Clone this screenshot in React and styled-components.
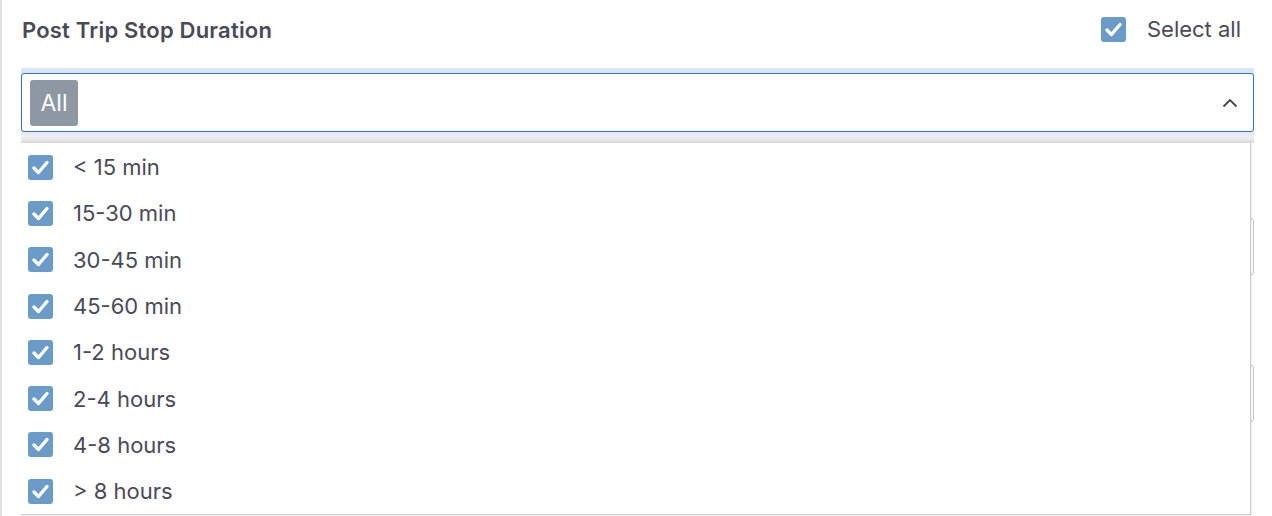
import React from "react";
import styled, { createGlobalStyle } from "styled-components";

const Global = createGlobalStyle`
  html, body { margin: 0; padding: 0; background: #fff; }
  body { font-family: Inter, "Noto Sans", sans-serif; }
`;

const Page = styled.div`
  position: relative;
  height: 516px;
  overflow: hidden;
  border-left: 2px solid #e2e2e2;
  padding: 0 18px 0 19px;
  color: #4a4a56;
`;

const Header = styled.div`
  display: flex;
  align-items: center;
  justify-content: space-between;
  height: 68px;
  padding: 0 13px 10px 1px;
  box-sizing: border-box;
`;

const Title = styled.h2`
  margin: 0;
  font-size: 22px;
  font-weight: 600;
  letter-spacing: 0.2px;
  color: #4a4a56;
  padding-top: 2px;
`;

const SelectAll = styled.label`
  display: flex;
  align-items: center;
  gap: 21px;
  font-size: 22px;
  color: #4a4a56;
`;

const Field = styled.div`
  position: relative;
  padding-top: 5px;
  background: #dbe5f4;
`;

const SelectBox = styled.div`
  display: flex;
  align-items: center;
  justify-content: space-between;
  height: 59px;
  box-sizing: border-box;
  border: 1px solid #2f6fd6;
  border-radius: 3px;
  background: #fff;
  padding: 0 15px 0 8px;
`;

const Chip = styled.span`
  display: inline-flex;
  align-items: center;
  justify-content: center;
  width: 48px;
  height: 46px;
  border-radius: 3px;
  background: #8d98a2;
  color: #fff;
  font-size: 23px;
`;

const Band = styled.div`
  height: 11px;
  background: linear-gradient(to bottom, #e4eaf3 0%, #eceef1 45%, #e6e6e6 75%, #d6d6d6 100%);
`;

const Behind = styled.div`
  display: flex;
  flex-direction: column;
`;

const GhostInput = styled.div`
  height: 55px;
  margin-top: ${(p) => p.$top}px;
  border: 1px solid #c8c8c8;
  border-radius: 3px;
`;

const Menu = styled.ul`
  position: absolute;
  left: 19px;
  right: 21px;
  top: 143px;
  margin: 0;
  padding: 1px 0 0;
  list-style: none;
  background: #fff;
  border-right: 1px solid #cfcfcf;
  border-bottom: 1px solid #cfcfcf;
  box-shadow: 1px 1px 1px rgba(0, 0, 0, 0.06);
  z-index: 2;
`;

const Option = styled.li`
  display: flex;
  align-items: center;
  gap: 20px;
  height: 46.3px;
  padding-left: 7px;
  font-size: 22px;
  color: #4a4a56;
`;

const Check = ({ size = 25 }) => (
  <svg width={size} height={size} viewBox="0 0 25 25" aria-hidden="true">
    <rect x="0" y="0" width="25" height="25" rx="3" fill="#6a9bc9" />
    <path
      d="M6 13 L10.5 17.5 L19 7.5"
      fill="none"
      stroke="#fff"
      strokeWidth="3.4"
      strokeLinecap="round"
      strokeLinejoin="round"
    />
  </svg>
);

const Chevron = () => (
  <svg width="16" height="10" viewBox="0 0 16 10" aria-hidden="true">
    <path d="M1.5 8.5 L8 2 L14.5 8.5" fill="none" stroke="#454550" strokeWidth="1.8" />
  </svg>
);

const options = [
  "< 15 min",
  "15-30 min",
  "30-45 min",
  "45-60 min",
  "1-2 hours",
  "2-4 hours",
  "4-8 hours",
  "> 8 hours",
];

export default function App() {
  return (
    <>
      <Global />
      <Page>
        <Header>
          <Title>Post Trip Stop Duration</Title>
          <SelectAll>
            <Check />
            Select all
          </SelectAll>
        </Header>
        <Field>
          <SelectBox>
            <Chip>All</Chip>
            <Chevron />
          </SelectBox>
          <Band />
        </Field>
        <Behind>
          <GhostInput $top={75} />
          <GhostInput $top={90} />
        </Behind>
        <Menu>
          {options.map((o) => (
            <Option key={o}>
              <Check />
              {o}
            </Option>
          ))}
        </Menu>
      </Page>
    </>
  );
}
